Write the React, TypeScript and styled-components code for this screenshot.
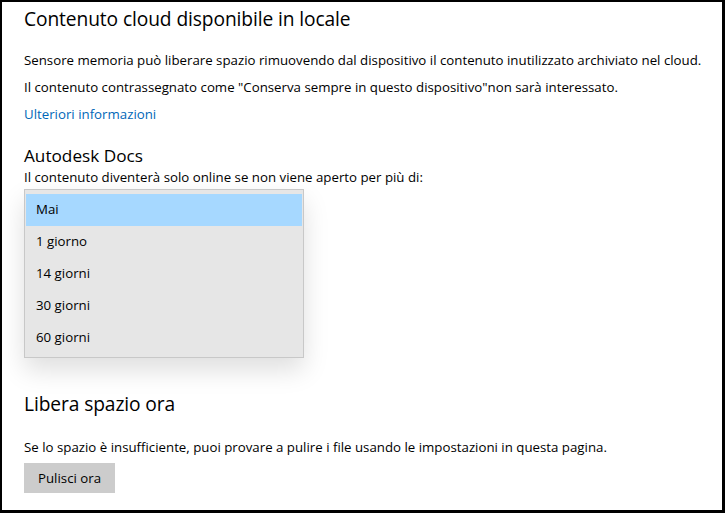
import React from 'react'
import styled, { createGlobalStyle } from 'styled-components'

const GlobalStyle = createGlobalStyle`
  html, body {
    margin: 0;
    padding: 0;
    background: #fff;
  }
  body {
    font-family: "Open Sans", "Noto Sans", sans-serif;
    color: #000;
  }
`

const Frame = styled.div`
  box-sizing: border-box;
  width: 725px;
  height: 513px;
  border-style: solid;
  border-color: #000;
  border-width: 2px 3px 3px 2px;
  padding: 3px 0 0 22px;
  overflow: hidden;
`

const Title = styled.h1<{ $top?: number }>`
  margin: ${p => p.$top ?? 0}px 0 0;
  font-size: 19.2px;
  font-weight: 400;
  line-height: 28px;
  letter-spacing: -0.1px;
`

const SubTitle = styled.h2`
  margin: 21px 0 0;
  font-size: 17.2px;
  font-weight: 400;
  line-height: 22px;
`

const Text = styled.p<{ $top: number }>`
  margin: ${p => p.$top}px 0 0;
  font-size: 13.27px;
  line-height: 20px;
`

const MoreLink = styled.a`
  display: block;
  margin-top: 7px;
  font-size: 13.27px;
  line-height: 20px;
  color: #0067b8;
  text-decoration: none;
`

const Menu = styled.ul`
  box-sizing: border-box;
  list-style: none;
  margin: 2px 0 0;
  width: 280px;
  padding: 4px 1px 3px;
  background: #e6e6e6;
  border: 1px solid #c8c8c8;
  box-shadow: 0 12px 24px rgba(0, 0, 0, 0.13);
`

const Item = styled.li<{ $selected?: boolean }>`
  height: 32px;
  display: flex;
  align-items: center;
  padding: 0 0 2px 10px;
  box-sizing: border-box;
  font-size: 13.27px;
  background: ${p => (p.$selected ? '#a6d8ff' : 'transparent')};
`

const Button = styled.button`
  margin-top: 6px;
  height: 30px;
  padding: 0 14px;
  border: none;
  background: #cccccc;
  color: #000;
  font-family: inherit;
  font-size: 13.27px;
`

const options = ['Mai', '1 giorno', '14 giorni', '30 giorni', '60 giorni']

export default function App() {
  return (
    <>
      <GlobalStyle />
      <Frame>
        <Title>Contenuto cloud disponibile in locale</Title>
        <Text $top={17}>
          Sensore memoria può liberare spazio rimuovendo dal dispositivo il contenuto inutilizzato archiviato nel cloud.
        </Text>
        <Text $top={7}>
          Il contenuto contrassegnato come "Conserva sempre in questo dispositivo"non sarà interessato.
        </Text>
        <MoreLink href="#">Ulteriori informazioni</MoreLink>
        <SubTitle>Autodesk Docs</SubTitle>
        <Text $top={0}>Il contenuto diventerà solo online se non viene aperto per più di:</Text>
        <Menu>
          {options.map((o, i) => (
            <Item key={o} $selected={i === 0}>{o}</Item>
          ))}
        </Menu>
        <Title $top={32}>Libera spazio ora</Title>
        <Text $top={19}>
          Se lo spazio è insufficiente, puoi provare a pulire i file usando le impostazioni in questa pagina.
        </Text>
        <Button>Pulisci ora</Button>
      </Frame>
    </>
  )
}
